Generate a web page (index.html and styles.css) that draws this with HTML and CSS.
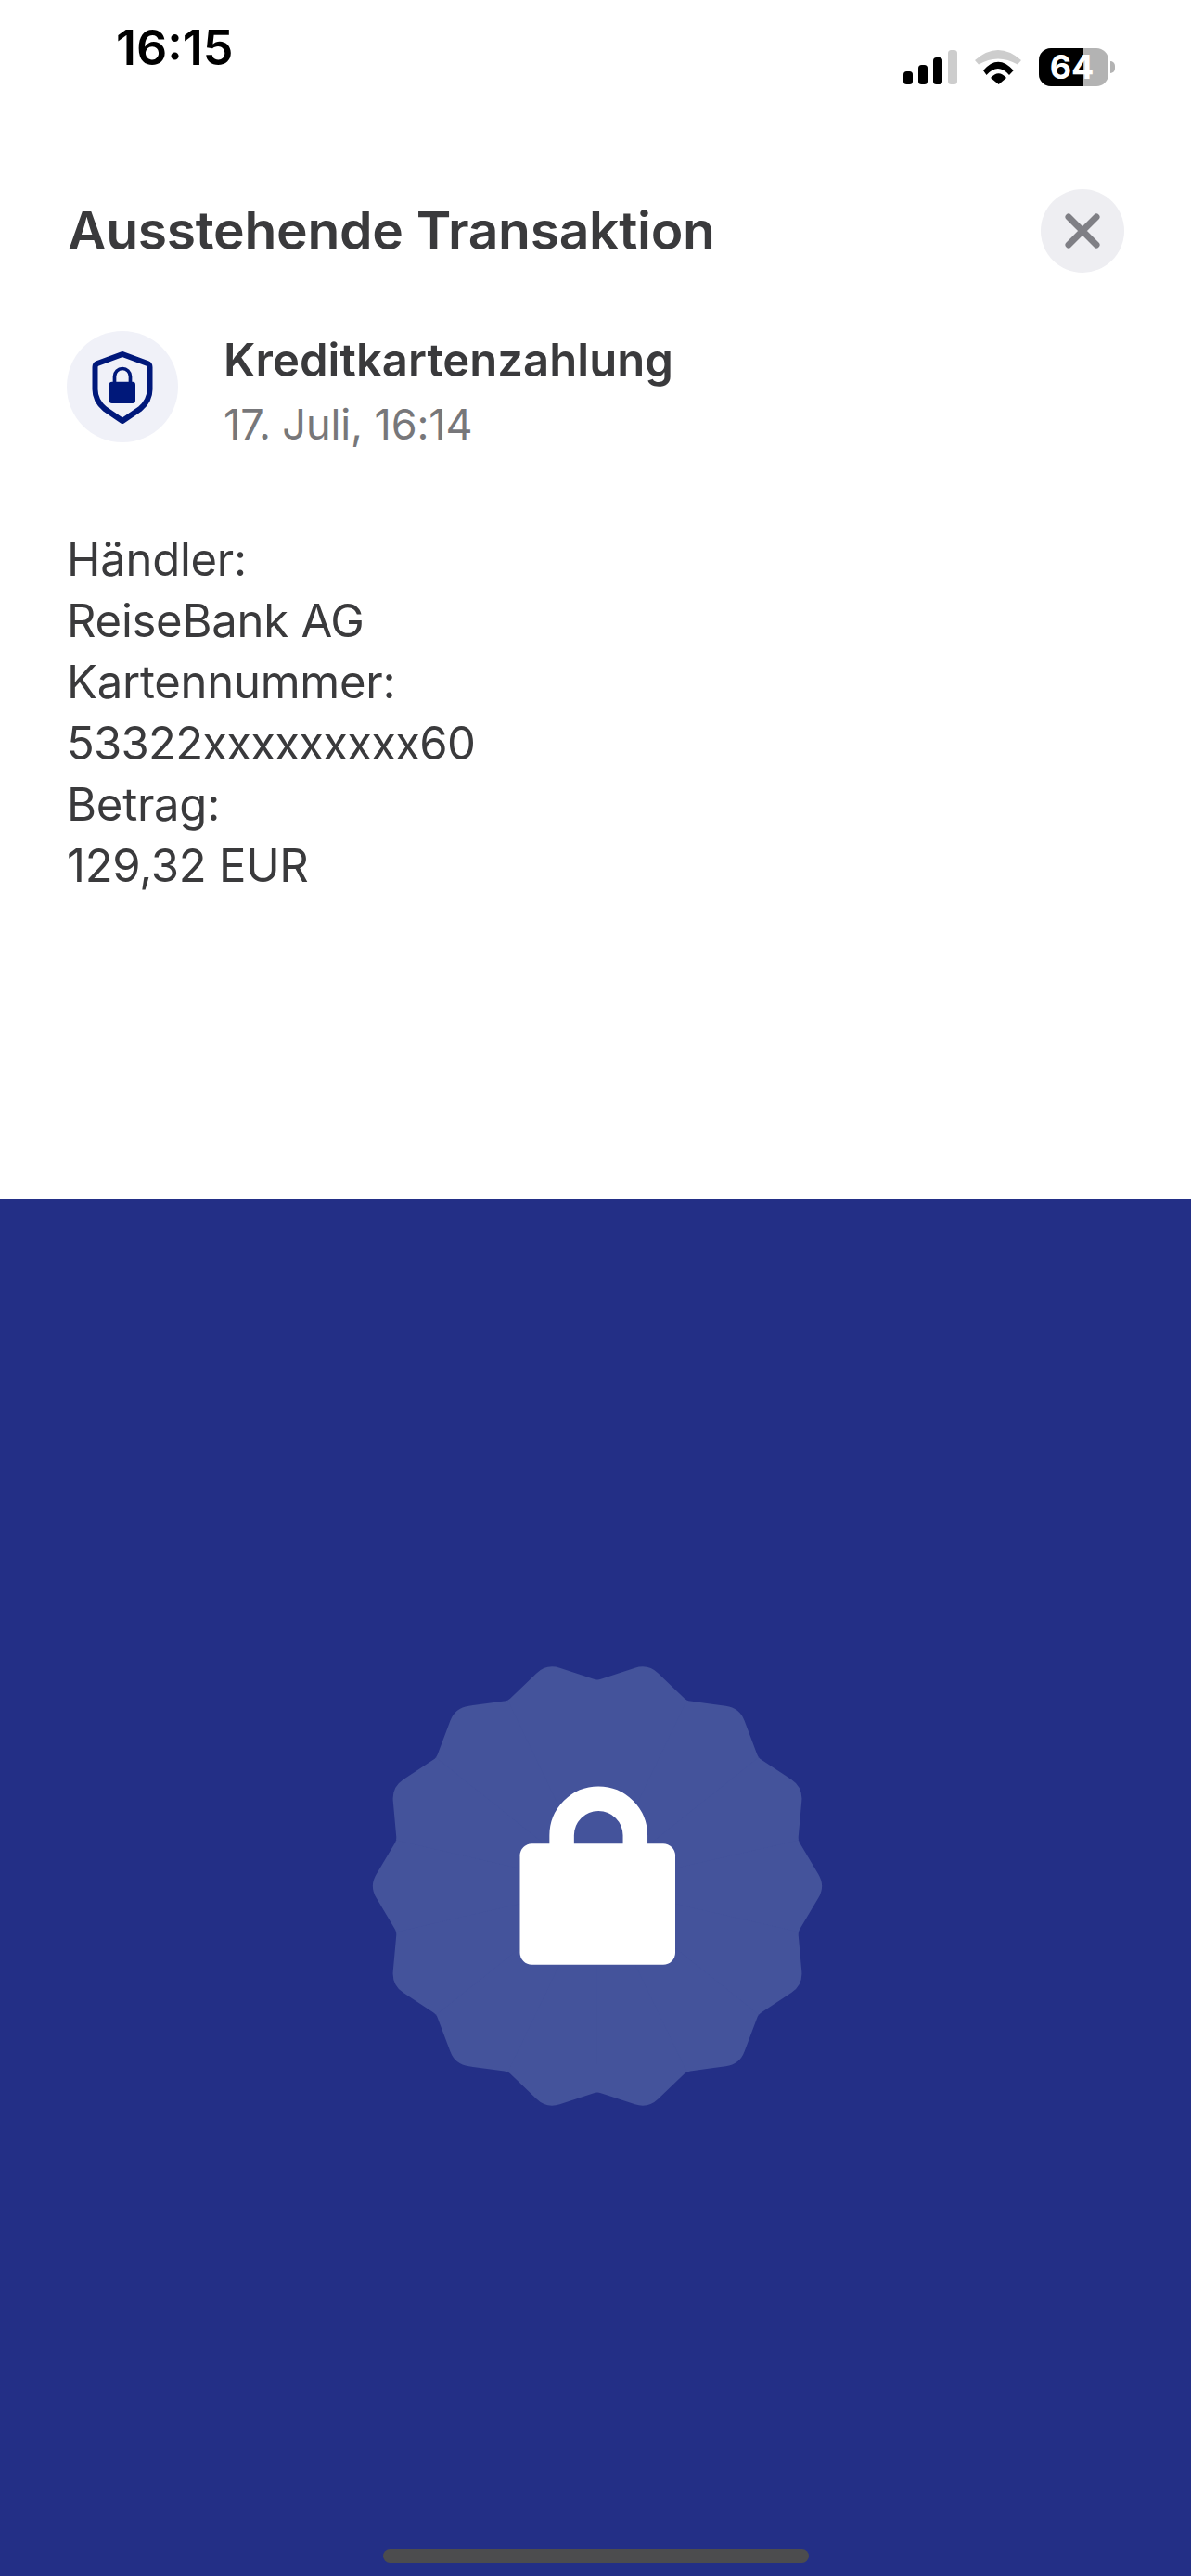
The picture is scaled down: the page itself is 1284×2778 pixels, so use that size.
FILE: index.html
```html
<!DOCTYPE html>
<html lang="de">
<head>
<meta charset="utf-8">
<title>Ausstehende Transaktion</title>
<link rel="stylesheet" href="styles.css">
</head>
<body>
<main class="screen">
  <section class="sheet">
    <header class="status">
      <span class="time">16:15</span>
      <div class="indicators">
        <svg class="signal" width="58" height="37" viewBox="0 0 58 37">
          <rect x="0" y="23" width="10" height="14" rx="3.5" fill="#000"/>
          <rect x="16" y="16" width="10" height="21" rx="3.5" fill="#000"/>
          <rect x="32" y="8" width="10" height="29" rx="3.5" fill="#000"/>
          <rect x="48" y="0" width="10" height="37" rx="3.5" fill="#cdcdcd"/>
        </svg>
        <svg class="wifi" width="50" height="37" viewBox="0 0 50 37">
          <path d="M0 11 Q25 -11 50 11 L46 15.5 Q25 3.5 4 15.5 Z" fill="#cdcdcd"/>
          <path d="M9 22 Q25 3.4 41.7 22 L37 27 Q25 13 12.5 27 Z" fill="#000"/>
          <path d="M17 30 Q25.5 20.6 34 30 L25.7 37 Z" fill="#000"/>
        </svg>
        <div class="battery">
          <div class="battery-body">
            <span class="battery-level"></span>
            <span class="battery-text">64</span>
          </div>
          <span class="battery-nub"></span>
        </div>
      </div>
    </header>

    <div class="title-row">
      <h1 class="title">Ausstehende Transaktion</h1>
      <button class="close" aria-label="Schließen">
        <svg width="40" height="40" viewBox="0 0 40 40">
          <path d="M5 5 L35 35 M35 5 L5 35" stroke="#7f7f85" stroke-width="7" stroke-linecap="round" fill="none"/>
        </svg>
      </button>
    </div>

    <div class="tx-row">
      <div class="tx-icon">
        <svg width="66" height="80" viewBox="0 0 66 80">
          <path d="M33 5 L60 15 Q62.5 16 62.5 19 L62.5 43 Q62.5 55 52 64 L33 77 L14 64 Q3.5 55 3.5 43 L3.5 19 Q3.5 16 6 15 Z" fill="none" stroke="#00187a" stroke-width="6" stroke-linejoin="round"/>
          <path d="M24.5 36 L24.5 29 A8.5 8.5 0 0 1 41.5 29 L41.5 36" fill="none" stroke="#00187a" stroke-width="3.7"/>
          <rect x="18.7" y="34.7" width="28.3" height="23.3" rx="3" fill="#00187a"/>
        </svg>
      </div>
      <div class="tx-text">
        <div class="tx-name">Kreditkartenzahlung</div>
        <div class="tx-date">17. Juli, 16:14</div>
      </div>
    </div>

    <div class="details">
      <div>Händler:</div>
      <div>ReiseBank AG</div>
      <div>Kartennummer:</div>
      <div class="card-number">53322xxxxxxxxx60</div>
      <div>Betrag:</div>
      <div>129,32 EUR</div>
    </div>
  </section>

  <section class="lock-panel">
    <div class="badge">
      <svg width="500" height="500" viewBox="-250 -250 500 500">
        <defs>
          <path id="wedge" d="M0 0 L217.02 -49.53 Q217.47 -47.69 218.49 -45.97 L238.3 -12.87 Q246 0 238.3 12.87 L218.49 45.97 Q217.47 47.69 217.02 49.53 Z"/>
        </defs>
        <g fill="#44539b">
          <circle r="222"/>
          <use href="#wedge"/>
          <use href="#wedge" transform="rotate(25.714)"/>
          <use href="#wedge" transform="rotate(51.429)"/>
          <use href="#wedge" transform="rotate(77.143)"/>
          <use href="#wedge" transform="rotate(102.857)"/>
          <use href="#wedge" transform="rotate(128.571)"/>
          <use href="#wedge" transform="rotate(154.286)"/>
          <use href="#wedge" transform="rotate(180)"/>
          <use href="#wedge" transform="rotate(205.714)"/>
          <use href="#wedge" transform="rotate(231.429)"/>
          <use href="#wedge" transform="rotate(257.143)"/>
          <use href="#wedge" transform="rotate(282.857)"/>
          <use href="#wedge" transform="rotate(308.571)"/>
          <use href="#wedge" transform="rotate(334.286)"/>
        </g>
        <path d="M-38.4 -40 L-38.4 -54.7 A39.6 39.6 0 0 1 40.8 -54.7 L40.8 -40" fill="none" stroke="#fff" stroke-width="26.5"/>
        <rect x="-83.5" y="-45.7" width="167.5" height="130.5" rx="13" fill="#fff"/>
      </svg>
    </div>
    <div class="home-indicator"></div>
  </section>
</main>
</body>
</html>
```

FILE: styles.css
```css
* {
  box-sizing: border-box;
}

html,
body {
  margin: 0;
  padding: 0;
}

body {
  width: 1284px;
  height: 2778px;
  overflow: hidden;
  font-family: "Inter", "Liberation Sans", sans-serif;
  background: #fff;
}

.screen {
  display: flex;
  flex-direction: column;
  height: 2778px;
}

.sheet {
  height: 1293px;
  background: #fff;
  color: #3a3a3c;
}

.status {
  display: flex;
  justify-content: space-between;
  height: 120px;
  padding: 22px 82px 0 125px;
}

.time {
  font-size: 52px;
  font-weight: 600;
  line-height: 60px;
  color: #000;
}

.indicators {
  display: flex;
  align-items: flex-start;
  gap: 19px;
  padding-top: 32px;
}

.signal,
.wifi {
  display: block;
}

.battery {
  display: flex;
  align-items: center;
  gap: 2px;
  margin-top: -2px;
}

.battery-body {
  position: relative;
  width: 75px;
  height: 41px;
  border-radius: 13px;
  background: #b3b3b3;
}

.battery-level {
  display: block;
  width: 48px;
  height: 100%;
  border-radius: 13px 0 0 13px;
  background: #000;
}

.battery-text {
  position: absolute;
  inset: 0 4px 0 0;
  text-align: center;
  font-size: 36px;
  font-weight: 700;
  line-height: 41px;
  color: #fff;
}

.battery-nub {
  width: 5px;
  height: 13px;
  border-radius: 0 7px 7px 0;
  background: #b3b3b3;
}

.title-row {
  display: flex;
  align-items: center;
  justify-content: space-between;
  padding: 0 72px 0 73px;
  height: 90px;
  margin-top: 84px;
}

.title {
  margin: 0;
  font-size: 57px;
  font-weight: 600;
  letter-spacing: -0.3px;
  line-height: 66px;
}

.close {
  display: flex;
  align-items: center;
  justify-content: center;
  width: 90px;
  height: 90px;
  padding: 0;
  border: 0;
  border-radius: 50%;
  background: #eeeef2;
}

.tx-row {
  display: flex;
  align-items: flex-start;
  gap: 49px;
  margin-top: 63px;
  padding-left: 72px;
}

.tx-icon {
  display: flex;
  align-items: center;
  justify-content: center;
  width: 120px;
  height: 120px;
  border-radius: 50%;
  background: #f0f1f8;
}

.tx-text {
  padding-top: 3px;
}

.tx-name {
  font-size: 49px;
  font-weight: 600;
  letter-spacing: 0.05px;
  line-height: 58px;
}

.tx-date {
  margin-top: 15px;
  font-size: 45px;
  font-weight: 400;
  letter-spacing: -0.1px;
  line-height: 50px;
  color: #77777a;
}

.details {
  margin-top: 88px;
  padding-left: 72px;
  font-size: 49px;
  font-weight: 400;
  letter-spacing: -0.25px;
  line-height: 66px;
}

.card-number {
  letter-spacing: -0.75px;
}

.lock-panel {
  position: relative;
  flex: 1;
  display: flex;
  justify-content: center;
  background: #232f86;
}

.badge {
  margin-top: 491px;
  margin-left: 4px;
  height: 500px;
}

.badge svg {
  display: block;
}

.home-indicator {
  position: absolute;
  left: 413px;
  bottom: 14px;
  width: 459px;
  height: 15px;
  border-radius: 8px;
  background: #4c4c4e;
}
```
